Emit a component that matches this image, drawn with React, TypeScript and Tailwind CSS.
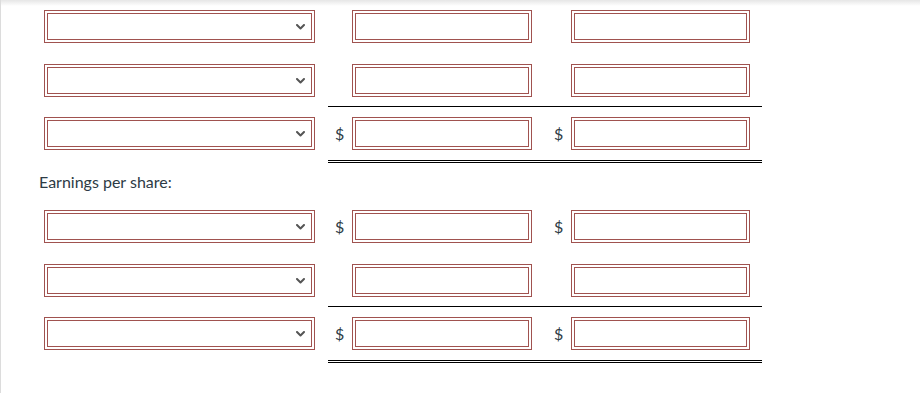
const LINE = "border-[#a0524f]";

const Box = ({ w, children }: { w: string; children?: any }) => (
    <div className={`${w} h-[33px] border ${LINE} p-[2px] bg-white`}>
        <div className={`h-full w-full border ${LINE} flex items-center justify-end pr-[6px]`}>
            {children}
        </div>
    </div>
);

const Chevron = () => (
    <svg width="9" height="6" viewBox="0 0 9 6" aria-hidden="true">
        <path d="M1 1l3.5 3.5L8 1" fill="none" stroke="#555" strokeWidth="2" strokeLinecap="round" strokeLinejoin="round" />
    </svg>
);

const Row = (props: { dollar?: boolean; total?: boolean }) => {
    const amount = (
        <>
            <div className="w-[217px] flex items-center pl-[7px]">
                <span className="w-[17px] text-[16px] leading-none">{props.dollar ? "$" : ""}</span>
                <Box w="w-[180px]" />
            </div>
            <div className="w-[217px] flex items-center pl-[9px]">
                <span className="w-[17px] text-[16px] leading-none">{props.dollar ? "$" : ""}</span>
                <Box w="w-[179px]" />
            </div>
        </>
    );

    return (
        <div className="flex items-start">
            <div className={props.total ? "pt-[11px]" : ""}>
                <Box w="w-[271px]">
                    <Chevron />
                </Box>
            </div>
            <div
                className={
                    "ml-[13px] w-[434px] flex " +
                    (props.total ? "border-double border-black border-t border-b-[3px] py-[10px]" : "")
                }
            >
                {amount}
            </div>
        </div>
    );
};

const Block = ({ firstDollar }: { firstDollar?: boolean }) => (
    <div className="flex flex-col">
        <Row dollar={firstDollar} />
        <div className="mt-[21px]">
            <Row />
        </div>
        <div className="mt-[9px]">
            <Row dollar total />
        </div>
    </div>
);

export default function App() {
    return (
        <div
            className="h-[393px] w-[920px] bg-white border-l border-[#dcdcdc] text-[#2d3b45] overflow-hidden"
            style={{ fontFamily: "Lato, 'Liberation Sans', sans-serif" }}
        >
            <div className="h-[6px] bg-gradient-to-b from-[#e6e6e6] to-white" />
            <div className="pl-[43px] pt-[4px]">
                <Block />
                <div className="-ml-[5px] mt-[7px] text-[16px] leading-[24px] h-[40px]">Earnings per share:</div>
                <Block firstDollar />
            </div>
        </div>
    );
}
